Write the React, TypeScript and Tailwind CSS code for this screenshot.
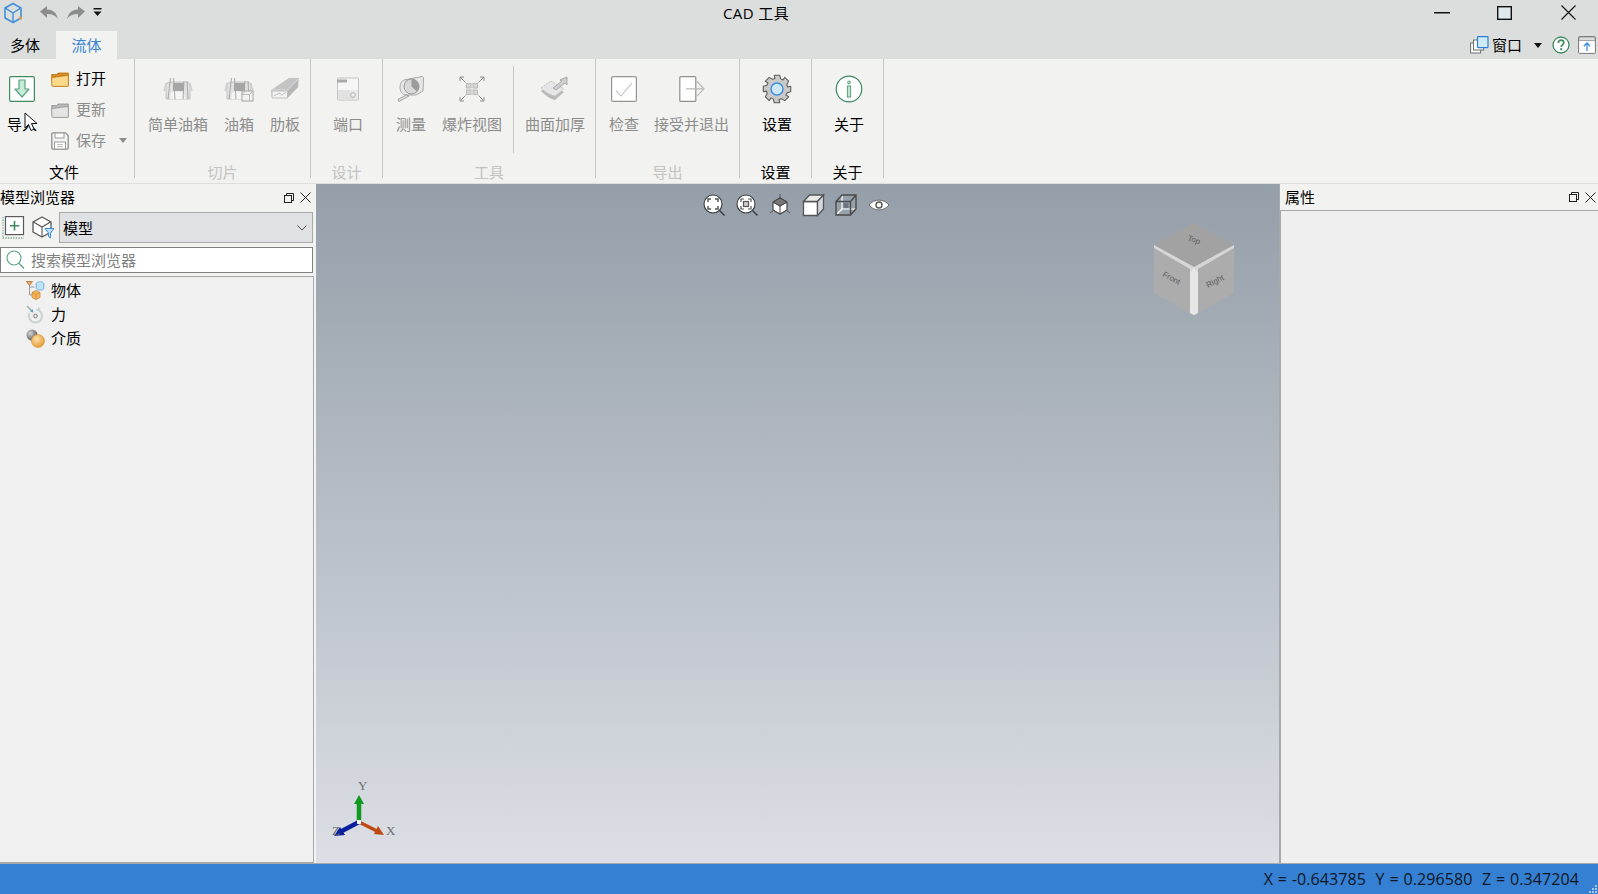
import React from 'react';

type GroupProps = {
  title: string;
  width: string;
  pad?: string;
  disabled?: boolean;
  titleClass?: string;
  children: React.ReactNode;
};

// gear outline for the settings button
const gearPath = (() => {
  const pts: string[] = [];
  const teeth = 8;
  for (let i = 0; i < teeth; i++) {
    const a = (i / teeth) * Math.PI * 2;
    const step = Math.PI / teeth;
    const rows: [number, number][] = [
      [a - step * 0.5, 14],
      [a + step * 0.5, 14],
      [a + step * 0.9, 10.8],
      [a + step * 1.5, 10.8],
    ];
    rows.forEach(([ang, r]) => {
      pts.push(`${(15 + Math.cos(ang) * r).toFixed(2)} ${(15 + Math.sin(ang) * r).toFixed(2)}`);
    });
  }
  return `M${pts.join('L')}Z`;
})();

function Logo() {
  return (
    <svg width="20" height="22" viewBox="0 0 20 22" fill="none">
      <path d="M10 1.500 18 6v10l-8 4.500L2 16V6z" stroke="#3f8fdc" strokeWidth="1.600" strokeLinejoin="round" />
      <path d="M2.500 6.200 10 11l7.500-4.800M10 11v9" stroke="#3f8fdc" strokeWidth="1.400" />
      <rect x="16" y="14.500" width="3" height="3" rx="1.500" fill="#e8953a" />
    </svg>
  );
}

function Undo({ flip }: { flip?: boolean }) {
  return (
    <svg width="18" height="13" viewBox="0 0 18 13" className={flip ? '-scale-x-100' : ''}>
      <path d="M0 5.500 7 0v3.400c5.600-.2 9.600 3.200 11 9.600C15.600 9.600 12 8 7 8.100V12z" fill="#8c8c8c" />
    </svg>
  );
}

function QuickMenu() {
  return (
    <svg width="9" height="9" viewBox="0 0 9 9">
      <rect x="0.500" y="0" width="8" height="1.500" fill="#111" />
      <path d="M.5 3.500h8L4.500 8z" fill="#111" />
    </svg>
  );
}

function ImportIcon() {
  return (
    <svg width="26" height="26" viewBox="0 0 26 26">
      <rect x="0.600" y="0.600" width="24.800" height="24.800" rx="1.500" fill="#fff" stroke="#3f8a60" strokeWidth="1.200" />
      <path d="M10 4h6v9h4l-7 8-7-8h4z" fill="#c8ecdc" stroke="#5aa27e" strokeWidth="1.200" strokeLinejoin="round" />
    </svg>
  );
}

function FolderIcon({ gray }: { gray?: boolean }) {
  const back = gray ? '#b9b9b9' : '#d18a22';
  const front = gray ? '#e4e4e4' : '#fbd98c';
  const line = gray ? '#9a9a9a' : '#c27c1b';
  return (
    <svg width="18" height="16" viewBox="0 0 18 16">
      <path d="M.6 3.500h5l1.500-1.500h10.300v13H1.500z" fill={back} stroke={line} strokeWidth=".9" />
      <path d="M.6 6.500C4 6.500 10 5 17.400 4.500V14.500c0 .5-.4.900-.9.900H2c-.6 0-1-.4-1.100-1z" fill={front} stroke={line} strokeWidth=".9" />
    </svg>
  );
}

function SaveIcon() {
  return (
    <svg width="18" height="18" viewBox="0 0 18 18" fill="none">
      <path d="M.8 2c0-.7.5-1.200 1.200-1.200h12.500l2.700 2.700V16c0 .7-.5 1.200-1.200 1.200H2c-.7 0-1.200-.5-1.200-1.200z" fill="#f4f4f4" stroke="#8d8d8d" strokeWidth="1.300" />
      <rect x="4" y="1" width="9" height="5" fill="#fff" stroke="#9a9a9a" />
      <rect x="3.500" y="10" width="11" height="7" fill="#fff" stroke="#9a9a9a" />
      <path d="M6 12.500h6M6 14.500h6" stroke="#c0c0c0" />
    </svg>
  );
}

function TankIcon({ withBox }: { withBox?: boolean }) {
  return (
    <svg width="30" height="26" viewBox="0 0 30 26" fill="none">
      <path d="M3 7.500 7.500 6h15L27 7.500v15.500H3z" fill="#e2e2e2" stroke="#c4c4c4" />
      <path d="M3 7.500 1 15M27 7.500l2 7.500" stroke="#cfcfcf" strokeWidth="1.400" />
      <path d="M10 7h11v8H10z" fill="#a6a6a6" />
      <path d="M8 17c2-2 4-2 6-1.500l6 1 3 6.500H7z" fill="#f5f5f5" />
      <path d="M7.500 2 5 23M10.500 2 12 23M21 5l-1 18M24 5l1 18" stroke="#a8a8a8" strokeWidth="1" />
      {withBox && (
        <g>
          <rect x="18" y="15" width="11" height="10" fill="#f2f2f0" stroke="#a3a3a3" />
          <path d="M18 18.500 21.500 15M18 18.500h7.500v6.500M25.500 18.500 29 15" stroke="#bcbcbc" />
        </g>
      )}
    </svg>
  );
}

function RibIcon() {
  return (
    <svg width="30" height="24" viewBox="0 0 30 24" fill="none">
      <path d="M1 13 19 1h10l-1 9L17 21H2z" fill="#c4c4c4" />
      <path d="M1 13h17l10-11" stroke="#dcdcdc" strokeWidth="1" />
      <path d="M2 14h15.500v7H2z" fill="#f2f2f2" stroke="#c0c0c0" />
      <path d="M4 19l5-3 3 2 4-3" stroke="#c0c0c0" />
      <path d="M17.500 21 28 10V3l-10.500 11z" fill="#b7b7b7" />
    </svg>
  );
}

function PortIcon() {
  return (
    <svg width="24" height="24" viewBox="0 0 24 24" fill="none">
      <rect x="1.500" y="1" width="21" height="22" rx="1" fill="#f6f6f6" stroke="#c4c4c4" />
      <rect x="1" y="2.500" width="10" height="3" fill="#a9a9a9" />
      <path d="M2 13h11c1 3 3 4 5 4v5.500H2z" fill="#e2e2e2" />
      <path d="M13 13h9v9.500h-9z" fill="#dcdcdc" opacity=".5" />
      <circle cx="17" cy="18" r="2.300" fill="#ededed" stroke="#b2b2b2" />
    </svg>
  );
}

function TapeIcon() {
  return (
    <svg width="28" height="28" viewBox="0 0 28 28" fill="none">
      <path d="M7 5 25 1.500c1 0 1.500.5 1.500 1.500l-.5 13-7 4H9C5 20 3 16 3 12c0-3 1.500-6 4-7z" fill="#e7e7e7" stroke="#a9a9a9" />
      <circle cx="14.500" cy="11.500" r="7.500" fill="#d9d9d9" stroke="#979797" />
      <path d="M14.500 4a7.500 7.500 0 0 1 7.500 7.500c0 2-.8 3.500-2 5l-5.500-5z" fill="#9c9c9c" />
      <path d="M9 20 1 24.500l.8 2L12 21z" fill="#e3e3e3" stroke="#a2a2a2" />
    </svg>
  );
}

function ExplodeIcon() {
  return (
    <svg width="26" height="26" viewBox="0 0 26 26" fill="none">
      <g fill="#d6d6d6" stroke="#b0b0b0" strokeWidth=".8">
        <rect x="7.500" y="7.500" width="4.500" height="4.500" />
        <rect x="14" y="7.500" width="4.500" height="4.500" />
        <rect x="7.500" y="14" width="4.500" height="4.500" />
        <rect x="14" y="14" width="4.500" height="4.500" />
      </g>
      <g stroke="#8f8f8f" strokeWidth="1">
        <path d="M1 1 6.500 6.500M1 1h4M1 1v4M25 1l-5.500 5.500M25 1h-4M25 1v4M1 25l5.500-5.500M1 25h4M1 25v-4M25 25l-5.500-5.500M25 25h-4M25 25v-4" />
      </g>
    </svg>
  );
}

function ThickenIcon() {
  return (
    <svg width="30" height="26" viewBox="0 0 30 26" fill="none">
      <path d="M1 15 11 8l13 8-9 8c-5-1-10-5-14-9z" fill="#b9b9b9" />
      <path d="M1 12 11 5l13 8-9 7C10 19 5 16 1 12z" fill="#e6e6e6" stroke="#c2c2c2" strokeDasharray="2 1" />
      <path d="M13 12 22 5l-2-1 7-3v8l-2-2-9 7z" fill="#cfcfcf" stroke="#a9a9a9" />
    </svg>
  );
}

function CheckIcon() {
  return (
    <svg width="26" height="26" viewBox="0 0 26 26" fill="none">
      <rect x=".6" y=".6" width="24.800" height="24.800" rx="1.500" fill="#fff" stroke="#949494" strokeWidth="1.200" />
      <path d="M5 14.500 10 20l11-13" stroke="#bdbdbd" strokeWidth="1.100" />
    </svg>
  );
}

function ExitIcon() {
  return (
    <svg width="26" height="26" viewBox="0 0 26 26" fill="none">
      <rect x=".8" y=".6" width="16" height="24.800" rx="1" fill="#fff" stroke="#8f8f8f" strokeWidth="1.200" />
      <path d="M7 12.800h17M18 5.500l7 7.300-7 7.300" stroke="#b9b9b9" strokeWidth="1.200" />
    </svg>
  );
}

function GearIcon() {
  return (
    <svg width="30" height="30" viewBox="0 0 30 30" fill="none">
      <path d={gearPath} fill="#c9c9c9" stroke="#5e5e5e" strokeWidth="1.100" strokeLinejoin="round" />
      <circle cx="15" cy="15" r="6" fill="#cde6fa" stroke="#3b8de0" strokeWidth="1.400" />
    </svg>
  );
}

function InfoIcon() {
  return (
    <svg width="28" height="28" viewBox="0 0 28 28" fill="none">
      <circle cx="14" cy="14" r="12.800" fill="#fff" stroke="#3f8a60" strokeWidth="1.200" />
      <circle cx="14" cy="7.500" r="1.400" fill="#bfe6d4" stroke="#3f8a60" strokeWidth=".8" />
      <rect x="12.300" y="11" width="3.400" height="11" fill="#bfe6d4" stroke="#3f8a60" strokeWidth=".8" />
    </svg>
  );
}

function WindowStackIcon() {
  return (
    <svg width="19" height="18" viewBox="0 0 19 18" fill="none">
      <rect x=".6" y="7" width="10" height="10" fill="#fff" stroke="#6f6f6f" />
      <rect x="3.500" y="4" width="10" height="10" fill="#fff" stroke="#6f6f6f" />
      <rect x="7.500" y=".6" width="10.500" height="11" rx=".5" fill="#cdeaf5" stroke="#2c7fd2" strokeWidth="1.200" />
    </svg>
  );
}

function HelpIcon() {
  return (
    <svg width="18" height="18" viewBox="0 0 18 18" fill="none">
      <circle cx="9" cy="9" r="8" fill="#fff" stroke="#3f8a60" strokeWidth="1.300" />
      <path d="M6.300 7c0-1.700 1.200-2.800 2.800-2.800S11.800 5.200 11.800 6.800 9.200 8.800 9.200 11" stroke="#3f8a60" strokeWidth="1.700" />
      <rect x="8.200" y="12.200" width="2" height="2" fill="#3f8a60" />
    </svg>
  );
}

function CollapseIcon() {
  return (
    <svg width="18" height="18" viewBox="0 0 18 18" fill="none">
      <rect x=".6" y=".6" width="16.800" height="16.800" rx="1" fill="#fff" stroke="#777" />
      <rect x="1" y="1" width="16" height="3.500" fill="#dcdedd" stroke="#777" strokeWidth=".6" />
      <path d="M9 7v8M5.800 10.200 9 7l3.200 3.200" stroke="#3f8fdc" strokeWidth="1.300" />
    </svg>
  );
}

function RestoreClose() {
  return (
    <div className="flex items-center gap-[6px]">
      <svg width="10" height="10" viewBox="0 0 10 10" fill="none" stroke="#222">
        <rect x=".5" y="2.500" width="7" height="7" />
        <path d="M2.500 2.500v-2h7v7h-2" />
      </svg>
      <svg width="11" height="11" viewBox="0 0 11 11" fill="none" stroke="#222">
        <path d="m.5.500 10 10M10.500.500l-10 10" />
      </svg>
    </div>
  );
}

function AddIcon() {
  return (
    <svg width="23" height="23" viewBox="0 0 23 23" fill="none">
      <path d="M1 1v21h21" stroke="#7da98f" strokeWidth="1.300" strokeDasharray="1.300 1.300" />
      <rect x="3.500" y=".6" width="18" height="18" fill="#fff" stroke="#5a5a5a" strokeWidth="1.200" />
      <path d="M12.500 5v9.500M7.800 9.700h9.500" stroke="#3f8a60" strokeWidth="1.600" />
    </svg>
  );
}

function CubeFilterIcon() {
  return (
    <svg width="22" height="23" viewBox="0 0 22 23" fill="none">
      <path d="M10 1 19 6v10l-9 5-9-5V6z" fill="#fff" stroke="#555" strokeWidth="1.300" strokeLinejoin="round" />
      <path d="M1.500 6 10 11l8.500-5M10 11v10" stroke="#555" strokeWidth="1.100" />
      <path d="M13 12.500h9l-3.500 4.500v5l-2-1.500V17z" fill="#bfe0f5" stroke="#3f8fdc" />
    </svg>
  );
}

function SearchIcon() {
  return (
    <svg width="19" height="20" viewBox="0 0 19 20" fill="none" stroke="#5aa27e" strokeWidth="1.100">
      <circle cx="8" cy="8" r="7" />
      <path d="m13 13.300 5 5.200" strokeWidth="1.300" />
    </svg>
  );
}

function BodyTreeIcon() {
  return (
    <svg width="19" height="19" viewBox="0 0 19 19" fill="none">
      <path d="M3.500 3v11h4M3.500 6h5" stroke="#9a9a9a" />
      <path d="M.5.500h6L3.500 4.500z" fill="#e9b07a" stroke="#b5651d" strokeWidth=".8" />
      <ellipse cx="14" cy="2.700" rx="3.800" ry="1.800" fill="#cfeaf8" stroke="#58a5dc" strokeWidth=".8" />
      <path d="M10.200 2.700v4.600c0 1 1.700 1.800 3.800 1.800s3.800-.8 3.800-1.800V2.700" fill="#bfe0f5" stroke="#58a5dc" strokeWidth=".8" />
      <path d="M10 9.500l4 2v5l-4 2-4-2v-5z" fill="#f3b65d" stroke="#c9852c" strokeWidth=".8" />
      <path d="M6 11.500l4 2 4-2M10 13.500v5" stroke="#c9852c" strokeWidth=".7" />
    </svg>
  );
}

function ForceIcon() {
  return (
    <svg width="19" height="19" viewBox="0 0 19 19" fill="none">
      <circle cx="9.500" cy="11" r="6.500" stroke="#c5d4cc" strokeWidth="2" strokeDasharray="26 8" transform="rotate(-30 9.500 11)" />
      <circle cx="9.500" cy="11" r="1.800" fill="#fff" stroke="#555" strokeWidth=".8" />
      <path d="M1 1 7 7" stroke="#9bb3a6" strokeWidth="1.500" />
      <path d="m7.500 7.500-3.500-1 2.500-2.500z" fill="#58a5dc" />
      <path d="m12 2 3 2-3 2z" fill="#c5d4cc" />
    </svg>
  );
}

function MediumIcon() {
  return (
    <svg width="19" height="19" viewBox="0 0 19 19">
      <defs>
        <radialGradient id="ballGray" cx=".35" cy=".35" r=".8">
          <stop offset="0" stopColor="#d5d5d5" />
          <stop offset="1" stopColor="#444" />
        </radialGradient>
        <radialGradient id="ballOrange" cx=".4" cy=".35" r=".8">
          <stop offset="0" stopColor="#fde2a8" />
          <stop offset="1" stopColor="#e08a1c" />
        </radialGradient>
      </defs>
      <circle cx="6" cy="6" r="5.500" fill="url(#ballGray)" />
      <circle cx="12" cy="12" r="6.500" fill="url(#ballOrange)" stroke="#d9972f" strokeWidth=".6" />
    </svg>
  );
}

function NavIcons() {
  const mag = (inner: React.ReactNode, key: string) => (
    <svg key={key} width="24" height="24" viewBox="0 0 24 24" fill="none">
      <circle cx="11" cy="11" r="9" fill="#fff" stroke="#3a3a3a" strokeWidth="1.100" />
      <path d="m17.500 17.500 5 5" stroke="#3a3a3a" strokeWidth="1.400" />
      {inner}
    </svg>
  );
  return (
    <div className="flex items-center gap-[9px]">
      {mag(
        <path d="M6 9V6h3M13 6h3v3M16 13v3h-3M9 16H6v-3" stroke="#555" strokeWidth="1.500" />,
        'fit',
      )}
      {mag(
        <g stroke="#555" strokeWidth="1.200">
          <path d="M6 9V6h3M13 6h3v3M16 13v3h-3M9 16H6v-3" />
          <rect x="8.500" y="8.500" width="5" height="5" fill="#cfcfcf" />
        </g>,
        'sel',
      )}
      <svg width="24" height="24" viewBox="0 0 24 24" fill="none" stroke="#444">
        <path d="M12 1v4M2 20l3-2M22 20l-3-2" strokeWidth=".8" />
        <path d="m12 5 7 4v8l-7 4-7-4V9z" fill="#fff" strokeWidth="1.200" />
        <path d="m5 9 7 4 7-4M12 13v8" strokeWidth="1" />
        <path d="m12 5 7 4-7 4-7-4z" fill="#777" />
      </svg>
      <svg width="24" height="24" viewBox="0 0 24 24" fill="none" stroke="#555" strokeWidth="1.300">
        <path d="M2.500 8.500h14v14h-14z" fill="#fff" />
        <path d="m2.500 8.500 6-6.500h14l-6 6.500z" fill="#e9e9e9" />
        <path d="m16.500 8.500 6-6.500v14l-6 6.500z" fill="#d4d8dc" />
      </svg>
      <svg width="24" height="24" viewBox="0 0 24 24" fill="none">
        <path d="M8 2v14h14M8 16l-6 6" stroke="#fff" strokeWidth="1.200" />
        <rect x="9.500" y="10" width="5" height="5" fill="#6d7680" />
        <path d="M2 8.500h14.500V22H2zM2 8.500 8 2h14v14l-5.500 6M16.500 8.500 22 2" stroke="#4a4a4a" strokeWidth="1.400" />
      </svg>
      <svg width="24" height="24" viewBox="0 0 24 24" fill="none">
        <path d="M2 12c5-6.500 15-6.500 20 0-5 6.500-15 6.500-20 0z" fill="#fff" stroke="#555" strokeWidth=".8" />
        <circle cx="12" cy="12" r="3" fill="#fff" stroke="#555" strokeWidth="1.400" />
      </svg>
    </div>
  );
}

function ViewCube() {
  return (
    <svg width="82" height="92" viewBox="0 0 82 92" className="absolute right-[44px] top-[39px]">
      <path d="M41 0 81 22v48L41 92 1 70V22z" fill="#acacac" />
      <path d="M1 22 6 19 41 0 76 19 81 22 41 44z" fill="#a2a2a2" />
      <path d="M1 22l0 3L37 46 37 90 41 92 45 90 45 46 81 25V22L41 44z" fill="#d6d6d6" />
      <path d="M37 50 41 44 45 50 45 90 41 92 37 90z" fill="#e6e6e6" />
      <text x="0" y="0" fontSize="8" fill="#5c5c5c" fontFamily="Liberation Sans, sans-serif" transform="translate(34 17) rotate(20)">Top</text>
      <text x="0" y="0" fontSize="8" fill="#5c5c5c" fontFamily="Liberation Sans, sans-serif" transform="translate(9 53) rotate(28)">Front</text>
      <text x="0" y="0" fontSize="8" fill="#5c5c5c" fontFamily="Liberation Sans, sans-serif" transform="translate(55 65) rotate(-28)">Right</text>
    </svg>
  );
}

function AxisTriad() {
  return (
    <svg width="80" height="62" viewBox="0 0 80 62" className="absolute left-[9px] bottom-[26px]">
      <path d="M34 46V27" stroke="#0f9a1f" strokeWidth="4.500" />
      <path d="M34 20l5 9h-10z" fill="#0f9a1f" />
      <path d="M34 47 15 57" stroke="#0a1f9c" strokeWidth="4.500" />
      <path d="M9 61l6-9 5 8z" fill="#0a1f9c" />
      <path d="M34 47l18 9" stroke="#c0490f" strokeWidth="3.500" />
      <path d="M59 60l-10-1 4-8z" fill="#c0490f" />
      <rect x="32" y="45" width="4" height="4" fill="#f3f3f3" />
      <text x="33" y="15" fontSize="13" fill="#6c6c6c" fontFamily="Liberation Serif, serif">Y</text>
      <text x="61" y="60" fontSize="13" fill="#6c6c6c" fontFamily="Liberation Serif, serif">X</text>
      <text x="7" y="60" fontSize="13" fill="#6c6c6c" fontFamily="Liberation Serif, serif">Z</text>
    </svg>
  );
}

function Cursor() {
  return (
    <svg width="14" height="20" viewBox="0 0 14 20" className="absolute left-[17px] top-[53px]">
      <path d="M1 1v15l3.500-3.500L7 18.500l3-1.500-2.500-5.500H13z" fill="#fff" stroke="#111" strokeWidth="1" strokeLinejoin="round" />
    </svg>
  );
}

function RibbonButton({ icon, label, disabled }: { icon: React.ReactNode; label: string; disabled?: boolean }) {
  return (
    <div className="flex flex-col items-center">
      <div className="mt-[14px] flex h-[32px] items-center justify-center">{icon}</div>
      <div className={`mt-[9px] whitespace-nowrap text-[15px] leading-[20px] ${disabled ? 'text-[#8c8c8c]' : 'text-black'}`}>
        {label}
      </div>
    </div>
  );
}

function RibbonGroup({ title, width, pad, disabled, titleClass, children }: GroupProps) {
  return (
    <div className={`flex h-[119px] flex-col border-r border-[#c6c6c6] ${width}`}>
      <div className={`flex h-[103px] shrink-0 gap-4 ${pad ?? ''}`}>{children}</div>
      <div
        className={`h-[20px] shrink-0 text-center text-[15px] leading-[20px] ${disabled ? 'text-[#c2c2c2]' : 'text-black'} ${titleClass ?? ''}`}
      >
        {title}
      </div>
    </div>
  );
}

function SmallButton({ icon, label, disabled }: { icon: React.ReactNode; label: string; disabled?: boolean }) {
  return (
    <div className="flex h-[31px] items-center">
      <div className="flex w-[18px] justify-center">{icon}</div>
      <span className={`ml-[7px] text-[15px] ${disabled ? 'text-[#8c8c8c]' : 'text-black'}`}>{label}</span>
    </div>
  );
}

function TreeRow({ icon, label }: { icon: React.ReactNode; label: string }) {
  return (
    <div className="flex h-[24px] items-center pl-[26px]">
      <div className="flex w-[19px] justify-center">{icon}</div>
      <span className="ml-[6px] text-[15px] text-black">{label}</span>
    </div>
  );
}

export default function App() {
  return (
    <div className="flex h-screen w-screen flex-col overflow-hidden bg-[#f2f2f0] font-['Open_Sans','Noto_Sans_CJK_SC',sans-serif] text-black">
      {/* Title bar */}
      <div className="flex h-[31px] items-center bg-[#dcdedd]">
        <div className="flex items-center pb-[6px]">
          <div className="ml-[3px]">
            <Logo />
          </div>
          <div className="ml-[17px]">
            <Undo />
          </div>
          <div className="ml-[9px]">
            <Undo flip />
          </div>
          <div className="ml-[8px]">
            <QuickMenu />
          </div>
          <div className="ml-[621px] whitespace-nowrap text-[15px] leading-[26px] tracking-[0.4px]">CAD 工具</div>
        </div>
        <div className="ml-auto flex items-center pb-[6px]">
          <svg width="16" height="2" viewBox="0 0 16 2">
            <rect width="16" height="1.500" fill="#111" />
          </svg>
          <svg width="15" height="14" viewBox="0 0 15 14" fill="none" className="ml-[47px]">
            <rect x=".7" y=".7" width="13.600" height="12.600" fill="#dfe9ee" stroke="#111" strokeWidth="1.400" />
          </svg>
          <svg width="15" height="15" viewBox="0 0 15 15" fill="none" className="ml-[49px] mr-[22px]" stroke="#111" strokeWidth="1.200">
            <path d="m.5.500 14 14M14.500.500l-14 14" />
          </svg>
        </div>
      </div>

      {/* Tabs */}
      <div className="flex h-[28px] items-stretch bg-[#dcdedd]">
        <div className="flex w-[56px] items-center pl-[10px] text-[15px]">多体</div>
        <div className="flex w-[61px] items-center justify-center bg-[#f2f2f0] text-[15px] text-[#3a85d0]">流体</div>
        <div className="ml-auto flex items-center">
          <WindowStackIcon />
          <span className="ml-[3px] text-[15px]">窗口</span>
          <svg width="8" height="5" viewBox="0 0 8 5" className="ml-[12px]">
            <path d="M0 0h8L4 5z" fill="#111" />
          </svg>
          <div className="ml-[10px] flex">
            <HelpIcon />
          </div>
          <div className="ml-[8px] mr-[2px] flex">
            <CollapseIcon />
          </div>
        </div>
      </div>

      {/* Ribbon */}
      <div className="flex h-[125px] border-b border-[#dfdfdf] bg-[#f2f2f0]">
        <RibbonGroup title="文件" width="w-[135px]" titleClass="pr-[6px]">
          <div className="relative ml-[7px]">
            <RibbonButton icon={<ImportIcon />} label="导入" />
            <Cursor />
          </div>
          <div className="-ml-[2px] flex flex-col pt-[4px]">
            <SmallButton icon={<FolderIcon />} label="打开" />
            <SmallButton icon={<FolderIcon gray />} label="更新" disabled />
            <div className="flex items-center">
              <SmallButton icon={<SaveIcon />} label="保存" disabled />
              <svg width="8" height="5" viewBox="0 0 8 5" className="ml-[13px]">
                <path d="M0 0h8L4 5z" fill="#8c8c8c" />
              </svg>
            </div>
          </div>
        </RibbonGroup>
        <RibbonGroup title="切片" width="w-[176px]" pad="pl-[13px]" disabled>
          <RibbonButton icon={<TankIcon />} label="简单油箱" disabled />
          <RibbonButton icon={<TankIcon withBox />} label="油箱" disabled />
          <RibbonButton icon={<RibIcon />} label="肋板" disabled />
        </RibbonGroup>
        <RibbonGroup title="设计" width="w-[72px]" pad="pl-[22px]" disabled>
          <RibbonButton icon={<PortIcon />} label="端口" disabled />
        </RibbonGroup>
        <RibbonGroup title="工具" width="w-[213px]" pad="pl-[13px]" disabled>
          <RibbonButton icon={<TapeIcon />} label="测量" disabled />
          <RibbonButton icon={<ExplodeIcon />} label="爆炸视图" disabled />
          <div className="-mx-[5px] mt-[7px] h-[87px] w-px bg-[#c6c6c6]" />
          <RibbonButton icon={<ThickenIcon />} label="曲面加厚" disabled />
        </RibbonGroup>
        <RibbonGroup title="导出" width="w-[144px]" pad="pl-[13px]" disabled>
          <RibbonButton icon={<CheckIcon />} label="检查" disabled />
          <div className="-ml-px">
            <RibbonButton icon={<ExitIcon />} label="接受并退出" disabled />
          </div>
        </RibbonGroup>
        <RibbonGroup title="设置" width="w-[72px]" pad="pl-[22px]">
          <RibbonButton icon={<GearIcon />} label="设置" />
        </RibbonGroup>
        <RibbonGroup title="关于" width="w-[72px]" pad="pl-[22px]">
          <RibbonButton icon={<InfoIcon />} label="关于" />
        </RibbonGroup>
      </div>

      {/* Main area */}
      <div className="flex min-h-0 flex-1">
        {/* Model browser */}
        <div className="flex w-[316px] flex-col bg-[#f2f2f0]">
          <div className="flex h-[27px] items-center justify-between pr-[5px]">
            <span className="text-[15px]">模型浏览器</span>
            <RestoreClose />
          </div>
          <div className="mt-px flex h-[31px] items-center pl-[2px] pr-[3px]">
            <AddIcon />
            <div className="ml-[7px]">
              <CubeFilterIcon />
            </div>
            <div className="ml-[5px] flex h-[31px] flex-1 items-center justify-between border border-[#a8a8a8] bg-[#dfe1e3] pl-[3px] pr-[5px] text-[15px]">
              <span className="pt-px">模型</span>
              <svg width="10" height="6" viewBox="0 0 10 6" fill="none" stroke="#555">
                <path d="m.5.500 4.500 4.500L9.500.500" />
              </svg>
            </div>
          </div>
          <div className="mr-[3px] mt-[4px] flex h-[26px] items-center border border-[#808080] bg-white pl-[5px]">
            <SearchIcon />
            <span className="ml-[6px] text-[15px] text-[#808080]">搜索模型浏览器</span>
          </div>
          <div className="mr-[2px] mt-[3px] min-h-0 flex-1 border border-l-0 border-[#a8a8a8] bg-[#f0f0f0] pt-px">
            <TreeRow icon={<BodyTreeIcon />} label="物体" />
            <TreeRow icon={<ForceIcon />} label="力" />
            <TreeRow icon={<MediumIcon />} label="介质" />
          </div>
        </div>

        {/* Viewport */}
        <div className="relative flex-1 bg-linear-to-b from-[#959fa9] to-[#dcdfe5]">
          <div className="absolute left-[386px] top-[9px]">
            <NavIcons />
          </div>
          <ViewCube />
          <AxisTriad />
        </div>

        {/* Properties */}
        <div className="flex w-[319px] flex-col border-l border-[#a8a8a8] bg-[#f2f2f0]">
          <div className="flex h-[26px] items-center justify-between pl-[5px] pr-[2px]">
            <span className="text-[15px]">属性</span>
            <RestoreClose />
          </div>
          <div className="min-h-0 flex-1 border-l border-t border-[#a8a8a8] bg-[#efefef]" />
        </div>
      </div>

      {/* Status bar */}
      <div className="relative flex h-[31px] items-center justify-end border-t border-[#a8a8a8] bg-[#3580d2] pr-[19px] text-[16px] tracking-[0.1px] text-[#0d1726] [word-spacing:0.5px]">
        <span className="whitespace-pre">X = -0.643785  Y = 0.296580  Z = 0.347204</span>
        <svg width="8" height="8" viewBox="0 0 8 8" className="absolute bottom-[1px] right-[1px]" fill="#a9c8ea">
          <rect x="6" y="0" width="2" height="2" />
          <rect x="3" y="3" width="2" height="2" />
          <rect x="6" y="3" width="2" height="2" />
          <rect x="0" y="6" width="2" height="2" />
          <rect x="3" y="6" width="2" height="2" />
          <rect x="6" y="6" width="2" height="2" />
        </svg>
      </div>
    </div>
  );
}
